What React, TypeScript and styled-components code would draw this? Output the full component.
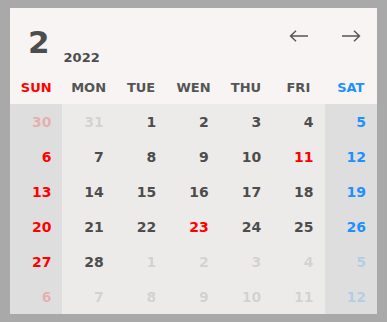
import styled, { createGlobalStyle } from "styled-components";

const GlobalStyle = createGlobalStyle`
  html, body {
    margin: 0;
    background: #a9a9a9;
  }
  body {
    padding: 8px 10px;
    font-family: "DejaVu Sans", Verdana, sans-serif;
  }
`;

type Tone = "sun" | "sat" | "day";

interface Cell {
  day: number;
  muted: boolean;
  holiday?: boolean;
}

const weekdays = ["SUN", "MON", "TUE", "WEN", "THU", "FRI", "SAT"];

// Feb 2022, padded with the tail of January and the head of March
const days: Cell[] = [
  { day: 30, muted: true },
  { day: 31, muted: true },
  ...Array.from({ length: 28 }, (_, i) => ({
    day: i + 1,
    muted: false,
    holiday: i + 1 === 11 || i + 1 === 23,
  })),
  ...Array.from({ length: 12 }, (_, i) => ({ day: i + 1, muted: true })),
];

const toneOf = (col: number): Tone => (col === 0 ? "sun" : col === 6 ? "sat" : "day");

function Arrow({ dir }: { dir: "left" | "right" }) {
  return (
    <svg width="20" height="12" viewBox="0 0 20 12">
      {dir === "left" ? (
        <path d="M19 6H1.5M7 0.8L1.5 6L7 11.2" fill="none" stroke="#555" strokeWidth="1.4" />
      ) : (
        <path d="M1 6H18.5M13 0.8L18.5 6L13 11.2" fill="none" stroke="#555" strokeWidth="1.4" />
      )}
    </svg>
  );
}

export default function App() {
  return (
    <>
      <GlobalStyle />
      <SC_Calendar>
        <SC_Header>
          <SC_Title>
            <SC_Month>2</SC_Month>
            <SC_Year>2022</SC_Year>
          </SC_Title>
          <SC_Nav>
            <SC_NavButton>
              <Arrow dir="left" />
            </SC_NavButton>
            <SC_NavButton>
              <Arrow dir="right" />
            </SC_NavButton>
          </SC_Nav>
        </SC_Header>
        <SC_WeekRow>
          {weekdays.map((w, i) => (
            <SC_WeekLabel key={w} tone={toneOf(i)}>
              {w}
            </SC_WeekLabel>
          ))}
        </SC_WeekRow>
        <SC_Grid>
          {days.map((d, i) => {
            const tone = toneOf(i % 7);
            return (
              <SC_Day
                key={i}
                tone={d.holiday ? "sun" : tone}
                weekend={tone !== "day"}
                muted={d.muted}
              >
                {d.day}
              </SC_Day>
            );
          })}
        </SC_Grid>
      </SC_Calendar>
    </>
  );
}

const toneColor = (tone: Tone, muted = false) => {
  const a = muted ? 0.22 : 1;
  if (tone === "sun") return `rgba(255, 0, 0, ${a})`;
  if (tone === "sat") return `rgba(30, 144, 255, ${a})`;
  return `rgba(77, 77, 77, ${muted ? 0.18 : 1})`;
};

const SC_Calendar = styled.div`
  width: 367px;
  background: #f7f4f3;
`;

const SC_Header = styled.div`
  height: 62px;
  display: flex;
  justify-content: space-between;
  padding: 0 16px 0 18px;
`;

const SC_Title = styled.div`
  display: flex;
  align-items: flex-end;
  gap: 14px;
  padding-bottom: 12px;
  color: #4d4d4d;
  font-weight: bold;
`;

const SC_Month = styled.span`
  font-size: 31px;
  line-height: 1;
`;

const SC_Year = styled.span`
  font-size: 13px;
  line-height: 1;
  margin-bottom: -6px;
`;

const SC_Nav = styled.div`
  display: flex;
  gap: 32px;
  padding-top: 22px;
`;

const SC_NavButton = styled.div`
  width: 20px;
  height: 12px;
  display: flex;
`;

const SC_WeekRow = styled.div`
  display: grid;
  grid-template-columns: repeat(7, 1fr);
  height: 34px;
  align-items: center;
`;

const SC_WeekLabel = styled.div<{ tone: Tone }>`
  text-align: center;
  font-size: 13px;
  font-weight: bold;
  color: ${(p) => (p.tone === "day" ? "#555" : toneColor(p.tone))};
`;

const SC_Grid = styled.div`
  display: grid;
  grid-template-columns: repeat(7, 1fr);
  grid-auto-rows: 35px;
  background: #edebea;
`;

const SC_Day = styled.div<{ tone: Tone; weekend: boolean; muted: boolean }>`
  display: flex;
  align-items: center;
  justify-content: flex-end;
  padding-right: 11px;
  font-size: 14px;
  font-weight: bold;
  background: ${(p) => (p.weekend ? "#dedede" : "transparent")};
  color: ${(p) => toneColor(p.tone, p.muted)};
`;
